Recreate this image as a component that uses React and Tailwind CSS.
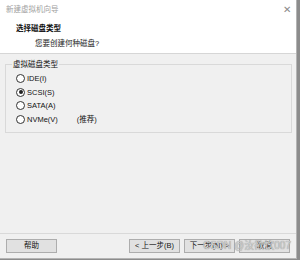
export default function App() {
  const font = { fontFamily: '"Liberation Sans", "Noto Sans CJK SC", sans-serif' };
  const Radio = ({ checked, label, extra }) => (
    <div className="flex items-center h-[13.5px]">
      <span className="w-[9px] h-[9px] rounded-full border border-[#333] bg-white flex items-center justify-center shrink-0">
        {checked && <span className="w-[4px] h-[4px] rounded-full bg-[#222]" />}
      </span>
      <span className="ml-[2px] text-[7.5px] text-[#111]">{label}</span>
      {extra && <span className="ml-[19px] text-[7.5px] text-[#111]">{extra}</span>}
    </div>
  );
  const Btn = ({ children }) => (
    <div className="w-[51px] h-[14px] border border-[#adadad] bg-[#e1e1e1] flex items-center justify-center text-[7.5px] text-[#111]">
      {children}
    </div>
  );
  return (
    <div className="w-[300px] h-[260px] flex bg-[#8c8c8c] overflow-hidden" style={font}>
      <div className="relative w-[297px] h-[259px] flex flex-col bg-[#f0f0f0] border-r border-b border-[#b4b4b4]">
        <div className="bg-white h-[54px] border-b border-[#d6d6d6] flex flex-col">
          <div className="flex items-center justify-between h-[20px] pl-[6px] pr-[5px]">
            <span className="text-[7.5px] text-[#a0a0a0]">新建虚拟机向导</span>
            <span className="text-[10px] text-[#8a8a8a] leading-none">✕</span>
          </div>
          <div className="pl-[16px] mt-[4px] text-[7.5px] font-bold text-[#111] leading-[10px]">选择磁盘类型</div>
          <div className="pl-[35px] mt-[5px] text-[7.5px] text-[#222] leading-[10px]">您要创建何种磁盘?</div>
        </div>
        <div className="flex-1 flex flex-col px-[5px]">
          <div className="relative mt-[10px] h-[69px] w-[287px] border border-[#d9d9d9] pt-[7px] pl-[10px]">
            <span className="absolute left-[6px] top-[-5px] px-[1px] bg-[#f0f0f0] text-[7.5px] text-[#111] leading-[10px]">虚拟磁盘类型</span>
            <Radio label="IDE(I)" />
            <Radio checked label="SCSI(S)" />
            <Radio label="SATA(A)" />
            <Radio label="NVMe(V)" extra="(推荐)" />
          </div>
          <div className="flex-1" />
          <div className="border-t border-[#d9d9d9] -mx-[5px] pt-[5px] px-[6px] pb-[5px] flex items-center">
            <Btn>帮助</Btn>
            <div className="flex-1" />
            <div className="flex gap-[4px]">
              <Btn>&lt; 上一步(B)</Btn>
              <Btn>下一步(N) &gt;</Btn>
              <Btn>取消</Btn>
            </div>
          </div>
        </div>
        <span className="absolute left-[203px] top-[240px] text-[10px] leading-[12px] text-[#d0d0d0] pointer-events-none" style={{ textShadow: '0 0 1px #777' }}>
          CSDN @汝欲饮007
        </span>
      </div>
    </div>
  );
}
